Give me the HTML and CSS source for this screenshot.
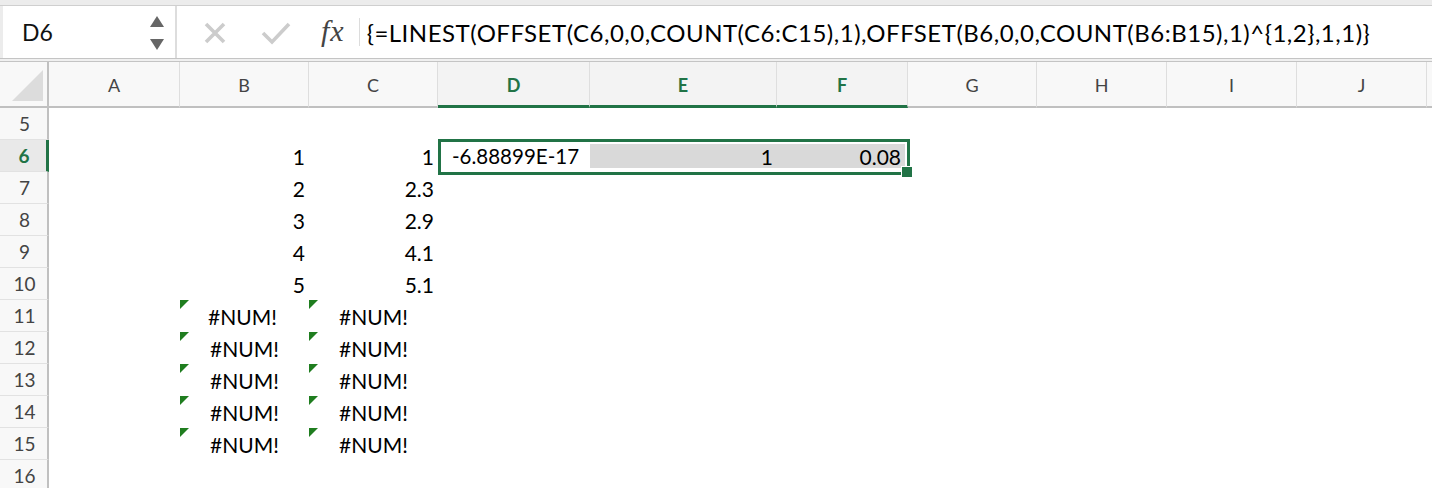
FILE: index.html
```html
<!DOCTYPE html>
<html>
<head>
<meta charset="utf-8">
<link rel="stylesheet" href="styles.css">
</head>
<body>
<div class="app">
  <div class="topband"></div>
  <div class="fbar">
    <div class="namebox">
      <span class="nb-text">D6</span>
      <div class="nb-arrows">
        <svg width="16" height="36" viewBox="0 0 16 36"><polygon points="1,12 8,1 15,12" fill="#666"/><polygon points="1,24 15,24 8,35" fill="#666"/></svg>
      </div>
    </div>
    <div class="fsep"></div>
    <div class="fmain">
      <svg class="ico-x" width="24" height="24" viewBox="0 0 24 24"><path d="M3 3 L21 21 M21 3 L3 21" stroke="#cccccc" stroke-width="3.6" fill="none"/></svg>
      <svg class="ico-check" width="30" height="24" viewBox="0 0 30 24"><path d="M2 12 L11 21 L28 3" stroke="#cccccc" stroke-width="3.6" fill="none"/></svg>
      <span class="fx">fx</span>
      <div class="fdiv"></div>
      <span class="ftext">{=LINEST(OFFSET(C6,0,0,COUNT(C6:C15),1),OFFSET(B6,0,0,COUNT(B6:B15),1)^{1,2},1,1)}</span>
    </div>
  </div>
  <div class="fbottom"></div>

  <div class="sheet">
    <div class="grid">
      <div class="ch corner"><svg width="31" height="31" viewBox="0 0 31 31"><polygon points="0,31 31,31 31,0" fill="#dcdcdc"/></svg></div>
      <div class="ch">A</div><div class="ch">B</div><div class="ch">C</div>
      <div class="ch sel">D</div><div class="ch sel">E</div><div class="ch sel">F</div>
      <div class="ch">G</div><div class="ch">H</div><div class="ch">I</div><div class="ch">J</div><div class="ch last"></div>

      <div class="rh">5</div><div class="c"></div><div class="c"></div><div class="c"></div><div class="c"></div><div class="c"></div><div class="c"></div><div class="c"></div><div class="c"></div><div class="c"></div><div class="c"></div><div class="c"></div>

      <div class="rh rsel">6</div><div class="c"></div><div class="c n">1</div><div class="c n">1</div><div class="c l d6">-6.88899E-17</div><div class="c n hl">1</div><div class="c n hl hlf">0.08</div><div class="c"></div><div class="c"></div><div class="c"></div><div class="c"></div><div class="c"></div>

      <div class="rh">7</div><div class="c"></div><div class="c n">2</div><div class="c n">2.3</div><div class="c"></div><div class="c"></div><div class="c"></div><div class="c"></div><div class="c"></div><div class="c"></div><div class="c"></div><div class="c"></div>

      <div class="rh">8</div><div class="c"></div><div class="c n">3</div><div class="c n">2.9</div><div class="c"></div><div class="c"></div><div class="c"></div><div class="c"></div><div class="c"></div><div class="c"></div><div class="c"></div><div class="c"></div>

      <div class="rh">9</div><div class="c"></div><div class="c n">4</div><div class="c n">4.1</div><div class="c"></div><div class="c"></div><div class="c"></div><div class="c"></div><div class="c"></div><div class="c"></div><div class="c"></div><div class="c"></div>

      <div class="rh">10</div><div class="c"></div><div class="c n">5</div><div class="c n">5.1</div><div class="c"></div><div class="c"></div><div class="c"></div><div class="c"></div><div class="c"></div><div class="c"></div><div class="c"></div><div class="c"></div>

      <div class="rh">11</div><div class="c"></div><div class="c e e1">#NUM!</div><div class="c e">#NUM!</div><div class="c"></div><div class="c"></div><div class="c"></div><div class="c"></div><div class="c"></div><div class="c"></div><div class="c"></div><div class="c"></div>

      <div class="rh">12</div><div class="c"></div><div class="c e">#NUM!</div><div class="c e">#NUM!</div><div class="c"></div><div class="c"></div><div class="c"></div><div class="c"></div><div class="c"></div><div class="c"></div><div class="c"></div><div class="c"></div>

      <div class="rh">13</div><div class="c"></div><div class="c e">#NUM!</div><div class="c e">#NUM!</div><div class="c"></div><div class="c"></div><div class="c"></div><div class="c"></div><div class="c"></div><div class="c"></div><div class="c"></div><div class="c"></div>

      <div class="rh">14</div><div class="c"></div><div class="c e">#NUM!</div><div class="c e">#NUM!</div><div class="c"></div><div class="c"></div><div class="c"></div><div class="c"></div><div class="c"></div><div class="c"></div><div class="c"></div><div class="c"></div>

      <div class="rh">15</div><div class="c"></div><div class="c e">#NUM!</div><div class="c e">#NUM!</div><div class="c"></div><div class="c"></div><div class="c"></div><div class="c"></div><div class="c"></div><div class="c"></div><div class="c"></div><div class="c"></div>

      <div class="rh">16</div><div class="c"></div><div class="c"></div><div class="c"></div><div class="c"></div><div class="c"></div><div class="c"></div><div class="c"></div><div class="c"></div><div class="c"></div><div class="c"></div><div class="c"></div>
    </div>
    <div class="selbox"></div>
    <div class="handle"></div>
  </div>
</div>
</body>
</html>
```

FILE: styles.css
```css
* { box-sizing: border-box; }
html, body { margin: 0; padding: 0; background: #ffffff; }
body { width: 1432px; height: 488px; overflow: hidden; font-family: Lato, "Open Sans", sans-serif; color: #000; }

.app { display: flex; flex-direction: column; width: 1432px; }

.topband { height: 6px; background: #ececec; border-bottom: 1px solid #cfcfcf; }

.fbar { display: flex; height: 52px; background: #ececec; }
.namebox {
  width: 172px; margin-left: 3px; background: #fff;
  display: flex; align-items: center; justify-content: space-between;
  padding: 0 10px 0 19px;
}
.nb-text { font-size: 23px; color: #111; }
.nb-arrows { display: flex; align-items: center; padding-top: 2px; }
.fsep { width: 2px; background: #dddddd; }
.fmain { flex: 1; background: #fff; display: flex; align-items: center; padding-left: 26px; }
.ico-x { margin-right: 34px; margin-top: 2px; }
.ico-check { margin-right: 30px; margin-top: 2px; }
.fx { font-family: "Liberation Serif", serif; font-style: italic; font-size: 30px; color: #444; margin-top: -2px; letter-spacing: 1px; }
.fdiv { width: 1px; height: 28px; background: #dcdcdc; margin-left: 14px; margin-right: 7px; }
.ftext { font-size: 24px; letter-spacing: 0.5px; color: #000; white-space: nowrap; }

.fbottom { height: 4px; border-top: 1px solid #c4c4c4; border-bottom: 1px solid #c4c4c4; background: #f0f0f0; }

.sheet { position: relative; }
.grid {
  display: grid;
  grid-template-columns: 49px 131px 129px 129px 152px 187px 131px 129px 130px 130px 130px 5px;
  grid-template-rows: 46px repeat(12, 32px);
}
.ch {
  background: #f8f8f8;
  border-right: 1px solid #dedede;
  border-bottom: 2px solid #c0c0c0;
  display: flex; align-items: center; justify-content: center;
  font-size: 18px; color: #444; padding-top: 2px;
}
.ch.corner { align-items: flex-end; justify-content: flex-end; padding: 0 4px 5px 0; border-right: 2px solid #c0c0c0; }
.ch.corner svg { display: block; }
.ch.sel { color: #217346; font-weight: bold; border-bottom: 3px solid #217346; background: #f3f3f3; }
.ch.last { border-right: none; }

.rh {
  background: #f8f8f8;
  border-right: 2px solid #c0c0c0;
  border-bottom: 1px solid #e2e2e2;
  display: flex; align-items: center; justify-content: center;
  font-size: 19px; color: #444; padding-left: 2px;
}
.rh.rsel { background: #e9e9e9; color: #217346; font-weight: bold; border-right: 3px solid #217346; }

.c { display: flex; align-items: center; font-size: 21px; white-space: nowrap; overflow: visible; position: relative; }
.c.n { justify-content: flex-end; padding-right: 4px; }
.c.l { padding-left: 14px; font-size: 20.5px; }
.c.e { justify-content: center; }
.c.e1 { padding-right: 4px; }
.c.e::before {
  content: ""; position: absolute; left: 0; top: 0;
  width: 0; height: 0;
  border-top: 9px solid #1f7d1f; border-right: 9px solid transparent;
}
.c.hl { background: #d9d9d9; margin: 4px 0; }
.c.hlf { margin-right: 3px; }

.selbox {
  position: absolute; left: 438px; top: 77px; width: 472px; height: 36px;
  border: 3px solid #217346; pointer-events: none;
}
.handle {
  position: absolute; left: 901px; top: 104px; width: 10px; height: 10px;
  background: #217346; border: 1px solid #fff; box-sizing: content-box;
}
```
